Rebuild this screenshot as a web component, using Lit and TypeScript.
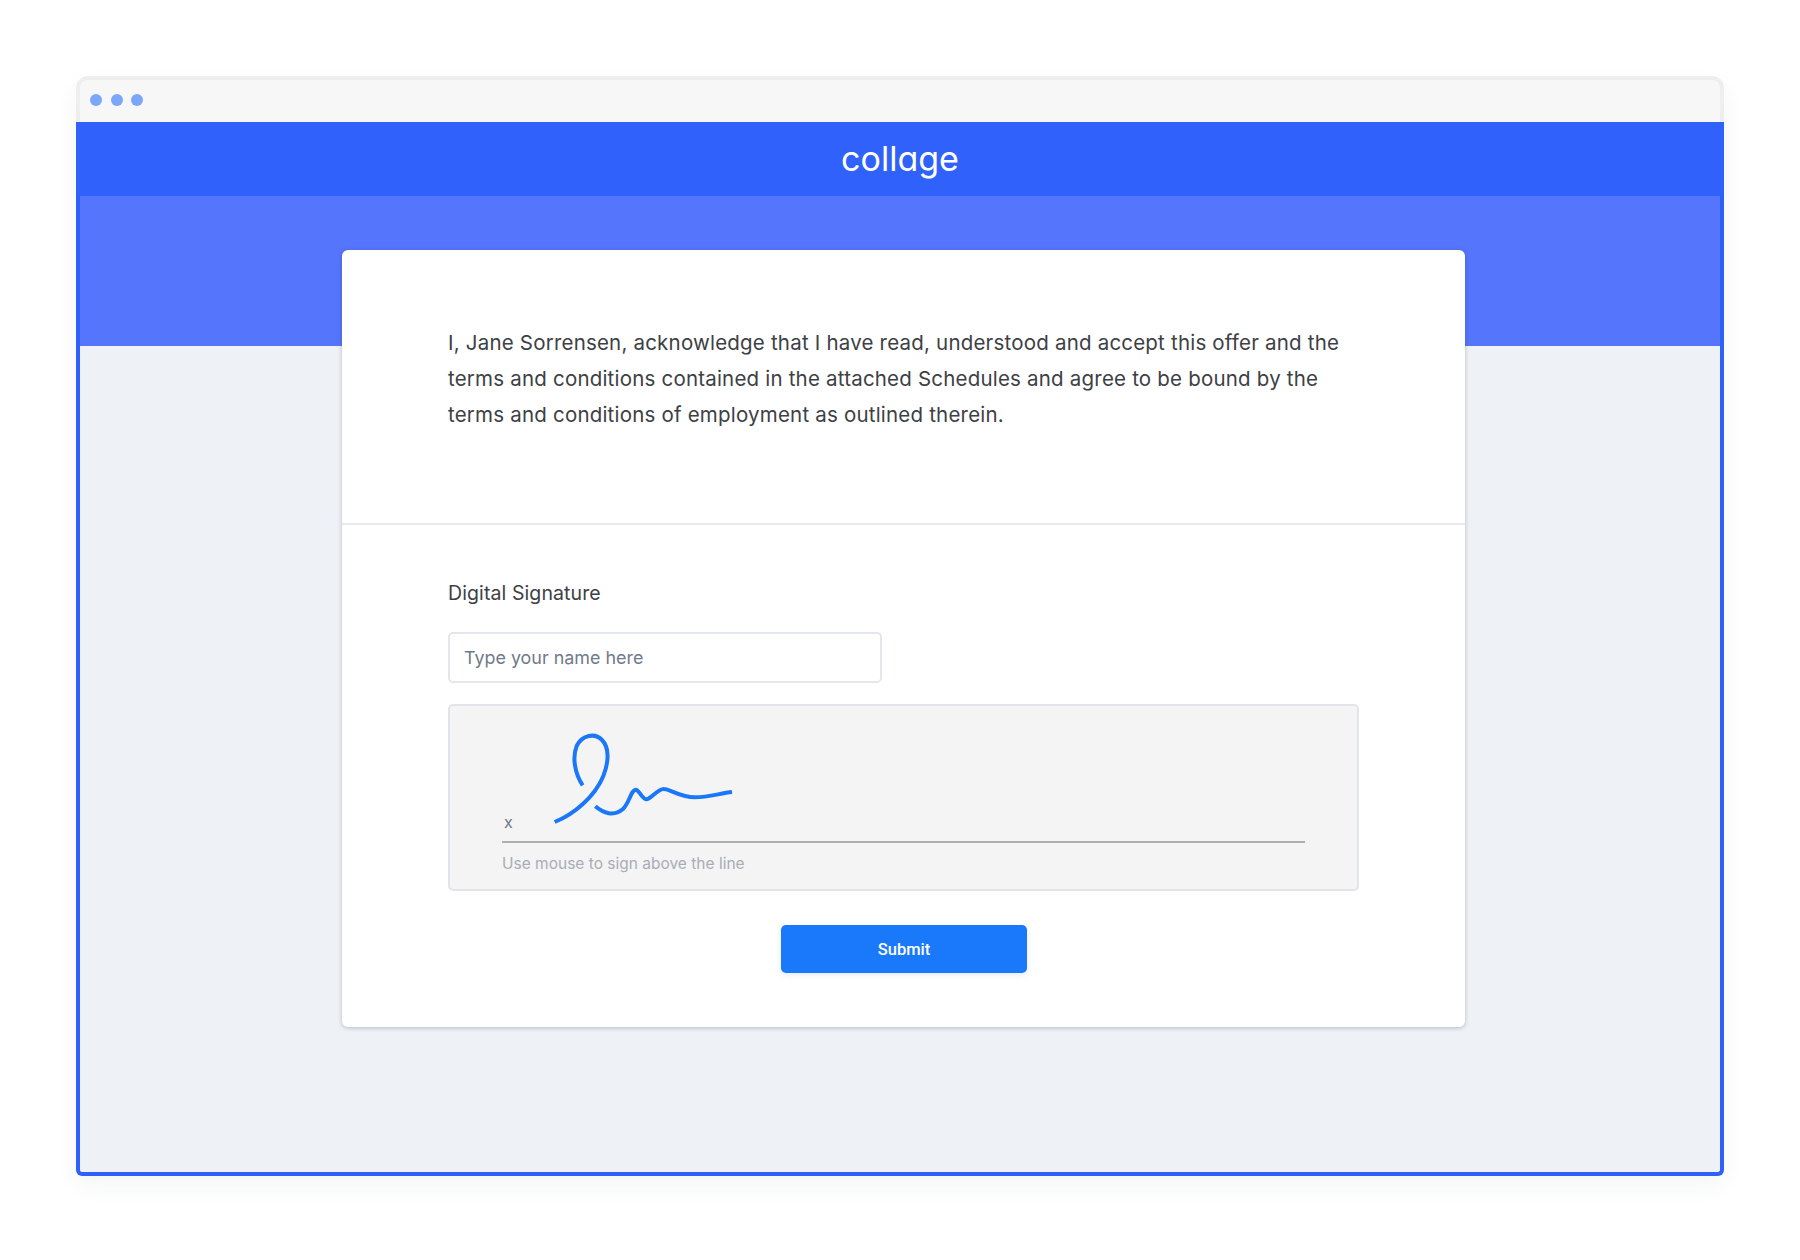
import { LitElement, html, css } from "lit";
import { customElement } from "lit/decorators.js";

@customElement("app-root")
export class AppRoot extends LitElement {
  static styles = css`
    :host { display: block; width: 1800px; height: 1260px; background: #fff; font-family: Inter, Lato, sans-serif; color: #3d4045; overflow: hidden; }
    * { box-sizing: border-box; }
    .page { padding: 76px 76px 0; }
    .window { display: flex; flex-direction: column; height: 1100px; border-radius: 12px; box-shadow: 0 10px 24px rgba(40, 50, 80, 0.05); }
    .titlebar { height: 46px; flex: none; display: flex; align-items: center; gap: 8.5px; padding: 0 0 2px 10px; background: #f7f7f8; border: 4px solid #eeeeee; border-bottom: 0; border-radius: 12px 12px 0 0; }
    .dot { width: 12px; height: 12px; border-radius: 50%; background: #7ba7fa; }
    .header { height: 74px; flex: none; background: #3062fb; display: flex; align-items: center; justify-content: center; padding-bottom: 2px; color: #fff; font-size: 34px; font-weight: 400; font-feature-settings: "cv11" 1; }
    .body { flex: 1; border: 4px solid #3060fa; border-top: 0; border-radius: 0 0 6px 6px; background: linear-gradient(#5575fd 149.5px, #eef1f6 149.5px); padding: 54px 0 0 262px; }
    .card { width: 1123px; height: 777px; background: #fff; border-radius: 6px; box-shadow: 0 1px 4px rgba(40, 50, 70, 0.28); display: flex; flex-direction: column; }
    .intro { height: 275px; padding: 75px 106px 0 106px; border-bottom: 2px solid #e8e9ec; font-size: 20.5px; line-height: 36px; letter-spacing: 0.2px; }
    .intro p { margin: 0; }
    .form { flex: 1; padding: 0 106px 54px 106px; display: flex; flex-direction: column; }
    .label { margin-top: 55px; font-size: 19.5px; line-height: 26px; height: 26px; letter-spacing: 0.1px; }
    .input { margin-top: 26px; width: 434px; height: 51px; border: 2px solid #e3e6eb; border-radius: 5px; padding: 0 14px; display: flex; align-items: center; font-size: 17.9px; color: #6f7a8c; }
    .sign { position: relative; margin-top: 21px; height: 187px; background: #f4f4f5; border: 2px solid #e1e4e9; border-radius: 5px; }
    .sign svg { position: absolute; left: -20px; top: -16px; width: 360px; height: 200px; }
    .x { position: absolute; left: 54px; top: 106px; font-size: 16px; line-height: 20px; color: #70747d; }
    .rule { position: absolute; left: 52px; top: 135px; width: 803px; height: 2px; background: #adafb4; }
    .hint { position: absolute; left: 52px; top: 147px; font-size: 15.5px; line-height: 22px; color: #a9adb5; }
    .submit { margin: 34px 0 0 333px; width: 246px; height: 48px; border: 0; border-radius: 5px; background: #1a78fa; color: #fff; font-family: Roboto, sans-serif; font-size: 16.5px; font-weight: 500; box-shadow: 0 2px 6px rgba(30, 80, 160, 0.12); }
  `;

  render() {
    return html`
      <div class="page">
        <div class="window">
          <div class="titlebar"><span class="dot"></span><span class="dot"></span><span class="dot"></span></div>
          <div class="header">collage</div>
          <div class="body">
            <div class="card">
              <div class="intro">
                <p>I, Jane Sorrensen, acknowledge that I have read, understood and accept this offer and the<br />terms and conditions contained in the attached Schedules and agree to be bound by the<br />terms and conditions of employment as outlined therein.</p>
              </div>
              <div class="form">
                <div class="label">Digital Signature</div>
                <div class="input">Type your name here</div>
                <div class="sign">
                  <svg viewBox="0 0 1080 600" fill="none" stroke="#1a78f8" stroke-width="12">
                    <path d="M374 396C430 374 495 320 520 258C537 215 538 172 516 150C495 128 457 134 440 168C425 205 437 255 458 286" />
                    <path d="M496 349C520 370 552 380 578 358C598 340 603 300 617 299C628 299 636 328 650 328C665 325 685 295 702 297C725 299 750 322 795 322C835 322 870 310 906 306" />
                  </svg>
                  <span class="x">x</span>
                  <div class="rule"></div>
                  <div class="hint">Use mouse to sign above the line</div>
                </div>
                <button class="submit">Submit</button>
              </div>
            </div>
          </div>
        </div>
      </div>
    `;
  }
}
